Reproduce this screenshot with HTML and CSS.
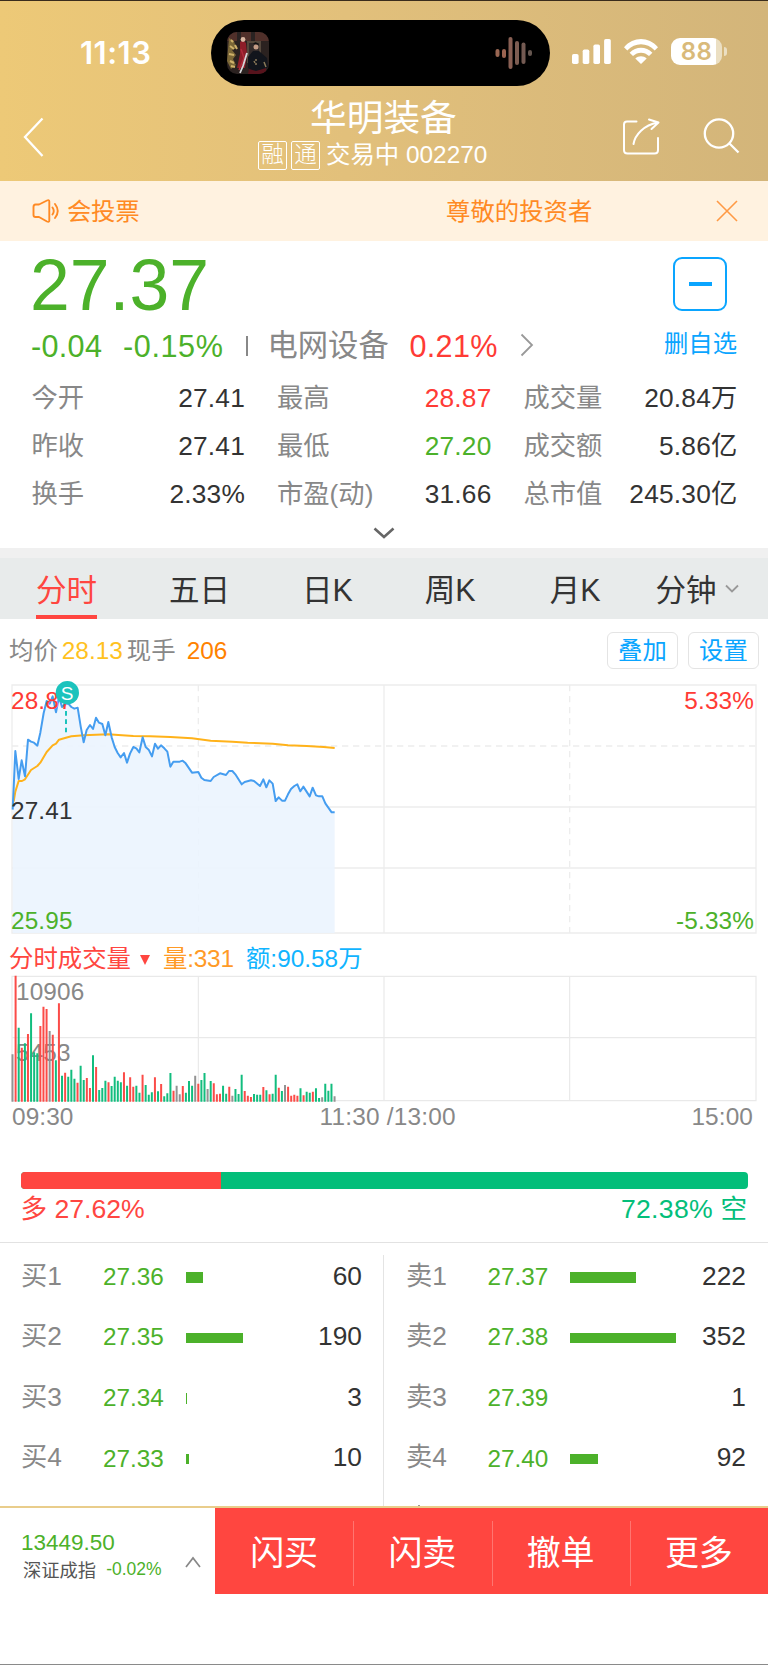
FILE: index.html
```html
<!DOCTYPE html>
<html lang="zh-CN">
<head>
<meta charset="utf-8">
<title>华明装备 002270</title>
<link rel="stylesheet" href="styles.css">
</head>
<body>
<div class="screen">
  <header class="header">
    <div class="status">
      <span class="clock">11:13</span>
      <div class="island">
        <svg class="art" viewBox="0 0 42 42">
          <defs><clipPath id="artClip"><rect width="42" height="42" rx="10"/></clipPath></defs>
          <g clip-path="url(#artClip)">
            <rect width="42" height="42" fill="#2b2220"/>
            <path d="M0 0H42V9H0Z" fill="#50302a"/>
            <path d="M10 0h4v12h-4zM24 0h4v10h-4z" fill="#2a2322"/>
            <path d="M20 9h14v22H20Z" fill="#55483c"/>
            <path d="M22 11h10v18H22Z" fill="#332b2a"/>
            <path d="M2 6l5 3 2 7-4 2 4 5-3 4 3 6-5 4-4-8Z" fill="#7b6737"/>
            <path d="M4 8l2 2M3 14l4 3M2 22l5 1M3 29l4 2M8 13l2 4M4 34l4 1" stroke="#d0b26a" stroke-width="2"/>
            <path d="M13 10l3-2 3 3 1 11-2 14H10l3-14Z" fill="#8d1d28"/>
            <path d="M14 17l3 9-5 12" stroke="#b02b3b" stroke-width="1.500" fill="none"/>
            <circle cx="16" cy="7.500" r="2.400" fill="#d9b7a2"/>
            <path d="M20 21l-4 13-3 7" stroke="#d5d6d8" stroke-width="1.800" fill="none"/>
            <path d="M21 25l5-6h6l8 7 1 9-9 7-11-6Z" fill="#12151c"/>
            <circle cx="29" cy="15" r="2.500" fill="#c49c86"/>
            <path d="M26 12q3-4 6 1l-3-1Z" fill="#111"/>
            <path d="M29 27v2M29 31v2M27 29l1 2M37 30l2 5" stroke="#8b7a59" stroke-width="1.500"/>
            <path d="M22 37l7 2 10-3v6H21Z" fill="#57131c"/>
          </g>
        </svg>
        <svg class="wave" viewBox="0 0 38 34">
          <g stroke-width="4" stroke-linecap="round">
            <path d="M2.500 15v4" stroke="#9a6753"/><path d="M9 15v5" stroke="#9a6350"/>
            <path d="M15.500 3v28" stroke="#8a6054"/><path d="M22 7v20" stroke="#7d5d52"/>
            <path d="M28.500 8.500v17.500" stroke="#745a52"/><path d="M35 16v2" stroke="#65564f"/>
          </g>
        </svg>
      </div>
      <svg class="signal" viewBox="0 0 39 25" fill="#fff">
        <rect y="15" width="6.600" height="10" rx="1.700"/><rect x="10.700" y="10.600" width="6.600" height="14.400" rx="1.700"/>
        <rect x="21.400" y="5.500" width="6.600" height="19.500" rx="1.700"/><rect x="32.100" width="6.700" height="25" rx="1.700"/>
      </svg>
      <svg class="wifi" viewBox="0 0 34 25" fill="#fff">
        <path d="M0 8.200C9.500-2.700 24.500-2.700 34 8.200L30.700 11.500C23 3.200 11 3.200 3.300 11.500Z"/>
        <path d="M5.600 13.800C12 7 22 7 28.400 13.800L25 17.100C20.500 12.500 13.500 12.500 9 17.100Z"/>
        <path d="M11.300 19.500C14.500 16.500 19.500 16.500 22.700 19.500L17 25Z"/>
      </svg>
      <div class="battery"><span class="cell"><span class="level">88</span></span><span class="nub"></span></div>
    </div>
    <div class="nav">
      <svg class="back" viewBox="0 0 22 42"><path d="M19.500 2.500L2 21L19.500 40" fill="none" stroke="#fff" stroke-width="2.300"/></svg>
      <div class="heading">
        <h1 class="title">华明装备</h1>
        <div class="subtitle"><span class="flag">融</span><span class="flag">通</span><span class="state">交易中 002270</span></div>
      </div>
      <svg class="share" viewBox="0 0 38 38" fill="none" stroke="#fff" stroke-width="2" stroke-linecap="round" stroke-linejoin="round">
        <path d="M14.500 3.500H5Q2 3.500 2 6.500V32Q2 35.500 5.500 35.500H32.500Q36 35.500 36 32V20"/>
        <path d="M11.500 26C13 17 22 7 35.500 4.500M27 1.500L36.500 4.500L29.500 11"/>
      </svg>
      <svg class="search" viewBox="0 0 38 38" fill="none" stroke="#fff" stroke-width="2.300"><circle cx="17" cy="15.500" r="14.200"/><path d="M27 25L36.500 34.500"/></svg>
    </div>
  </header>

  <div class="notice">
    <svg class="speaker" viewBox="0 0 28 24" fill="none" stroke="#ff8a24" stroke-width="1.900" stroke-linecap="round" stroke-linejoin="round">
      <path d="M15 1.500L7 5.500H3.500Q1.500 5.500 1.500 8V16Q1.500 18 3.500 18H7L15 22.500Q17.300 23.500 17.300 21.500V2.500Q17.300.500 15 1.500Z"/>
      <path d="M20.500 8.500Q23 12 20.500 15.500M23 5Q28.500 12 23 19"/>
    </svg>
    <span class="notice-a">会投票</span><span class="notice-b">尊敬的投资者</span>
    <svg class="close" viewBox="0 0 22 22"><path d="M1 1L21 21M21 1L1 21" stroke="#ff9a45" stroke-width="1.600"/></svg>
  </div>

  <section class="quote">
    <div class="quote-top">
      <div class="quote-main">
        <div class="price">27.37</div>
        <div class="change">
          <span class="down delta">-0.04</span><span class="down pct">-0.15%</span><i class="sep"></i>
          <span class="sector">电网设备</span><span class="up sector-pct">0.21%</span>
          <svg class="go" viewBox="0 0 14 24"><path d="M1.500 1.500L12 12L1.500 22.500" fill="none" stroke="#999" stroke-width="1.800"/></svg>
        </div>
      </div>
      <div class="fav"><span class="fav-box"><i></i></span><span class="fav-text">删自选</span></div>
    </div>
    <div class="stats">
      <div><span>今开</span><b>27.41</b></div><div><span>最高</span><b class="up">28.87</b></div><div><span>成交量</span><b>20.84万</b></div>
      <div><span>昨收</span><b>27.41</b></div><div><span>最低</span><b class="down">27.20</b></div><div><span>成交额</span><b>5.86亿</b></div>
      <div><span>换手</span><b>2.33%</b></div><div><span>市盈(动)</span><b>31.66</b></div><div><span>总市值</span><b>245.30亿</b></div>
    </div>
    <div class="more"><svg viewBox="0 0 22 12"><path d="M1.500 1.500L11 10L20.500 1.500" fill="none" stroke="#666" stroke-width="2.600"/></svg></div>
  </section>

  <nav class="tabs">
    <span class="tab active">分时</span><span class="tab">五日</span><span class="tab">日K</span><span class="tab">周K</span><span class="tab">月K</span>
    <span class="tab">分钟</span><svg class="tab-arrow" viewBox="0 0 14 10"><path d="M1 1.500L7 7.500L13 1.500" fill="none" stroke="#999" stroke-width="1.800"/></svg>
  </nav>

  <div class="info">
    <span>均价</span><span class="avg">28.13</span><span>现手</span><span class="last">206</span>
    <span class="btn">叠加</span><span class="btn">设置</span>
  </div>

  <svg class="chart" viewBox="0 0 2304 786">
    <g fill="none" stroke="#ededed" stroke-width="4">
      <path d="M36 30H2268V774H36ZM36 396H2268M36 579H2268M1152 30V774"/>
      <path d="M595 30V774M1709 30V774M36 213H2268" stroke-dasharray="19 14"/>
    </g>
    <path class="area" d=""/>
    <path fill="none" stroke="#ffb21a" stroke-width="6" stroke-linejoin="round" d="M41 380L46 350L56 318L66 318L75 313L93 285L112 273L121 263L140 231L158 211L168 206L177 194L195 189L214 184L233 182L251 181L288 179L325 178L355 180L400 183L450 184L511 186L576 190L632 197L697 200L743 203L818 206L864 211L920 213L971 216L1004 219"/>
    <path class="line" d=""/>
    <g class="label">
      <text x="33" y="102" fill="#ff3b35">28.87</text><text x="33" y="431" fill="#333">27.41</text><text x="33" y="762" fill="#4cb12a">25.95</text>
      <text x="2262" y="102" fill="#ff3b35" text-anchor="end">5.33%</text><text x="2262" y="762" fill="#4cb12a" text-anchor="end">-5.33%</text>
    </g>
    <path d="M198 108V172" stroke="#1cc3bd" stroke-width="6" stroke-dasharray="14 11"/>
    <circle cx="202" cy="53" r="35" fill="#1cc3bd"/>
    <text class="mark" x="201" y="74" text-anchor="middle">S</text>
  </svg>

  <div class="vol-title"><span class="vt-name">分时成交量</span><i class="tri"></i><span class="vt-vol">量:331</span><span class="vt-amt">额:90.58万</span></div>

  <svg class="volume" viewBox="0 105 2304 390">
    <path fill="none" stroke="#e9e9e9" stroke-width="3.500" d="M36 109H2268V482H36ZM36 293H2268M595 109V482M1152 109V482M1709 109V482"/>
    <g class="label" fill="#888"><text x="48" y="180">10906</text><text x="48" y="364">5453</text></g>
    <g class="bars"></g>
  </svg>

  <div class="axis"><span>09:30</span><span class="noon">11:30 /13:00</span><span>15:00</span></div>

  <div class="ratio">
    <div class="ratio-bar"><i class="bull" style="width:27.62%"></i></div>
    <div class="ratio-text"><span class="bull-text">多 27.62%</span><span class="bear-text">72.38% 空</span></div>
  </div>

  <div class="book">
    <div class="side">
      <div class="level-row"><span>买1</span><em>27.36</em><i style="width:17px"></i><b>60</b></div>
      <div class="level-row"><span>买2</span><em>27.35</em><i style="width:56.500px"></i><b>190</b></div>
      <div class="level-row"><span>买3</span><em>27.34</em><i style="width:1px"></i><b>3</b></div>
      <div class="level-row"><span>买4</span><em>27.33</em><i style="width:3px"></i><b>10</b></div>
    </div>
    <div class="side">
      <div class="level-row"><span>卖1</span><em>27.37</em><i style="width:66px"></i><b>222</b></div>
      <div class="level-row"><span>卖2</span><em>27.38</em><i style="width:105.500px"></i><b>352</b></div>
      <div class="level-row"><span>卖3</span><em>27.39</em><i style="width:0"></i><b>1</b></div>
      <div class="level-row"><span>卖4</span><em>27.40</em><i style="width:27.500px"></i><b>92</b></div>
      <div class="peek"></div>
    </div>
  </div>

  <footer class="footer">
    <div class="index">
      <div class="index-text"><div class="index-value">13449.50</div><div class="index-row"><span>深证成指</span><em>-0.02%</em></div></div>
      <svg class="caret" viewBox="0 0 16 12"><path d="M1 11L8 2L15 11" fill="none" stroke="#888" stroke-width="1.700"/></svg>
    </div>
    <div class="actions"><span>闪买</span><span>闪卖</span><span>撤单</span><span>更多</span></div>
  </footer>
</div>
<script src="chart.js"></script>
</body>
</html>
```

FILE: styles.css
```css
* { box-sizing: border-box; }
body { margin: 0; background: #fff; }
.screen {
  width: 768px; height: 1665px; overflow: hidden; display: flex; flex-direction: column;
  border-bottom: 1px solid #8a8a8a; background: #fff; color: #333;
  font-family: "Liberation Sans", "Noto Sans CJK SC", sans-serif; font-weight: 400; line-height: 1.2;
  white-space: nowrap;
}
.screen > * { flex: none; }
svg { display: block; flex: none; }
i, em { font-style: normal; }
b { font-weight: inherit; }
.up { color: #ff3b35; }
.down { color: #4cb12a; }

.header { height: 181px; border-top: 1px solid #3a2c1c; background: linear-gradient(90deg, #edc977, #e2c07b 45%, #d3b57a); color: #fff; }
.status { height: 99px; padding: 5px 0 0 80px; display: flex; align-items: center; }
.clock { width: 131px; font: 600 31px/40px Inter, sans-serif; letter-spacing: .5px; }
.island { width: 339px; height: 66px; border-radius: 33px; background: #000; padding: 0 17px 0 16px; display: flex; align-items: center; justify-content: space-between; }
.art { width: 42px; height: 42px; }
.wave { width: 38px; height: 34px; }
.signal { width: 39px; height: 25px; margin-left: 22px; margin-top: -3px; }
.wifi { width: 34px; height: 25px; margin-left: 13px; margin-top: -3px; }
.battery { display: flex; align-items: center; gap: 2px; margin-left: 13px; margin-top: -3px; }
.cell { width: 51px; height: 27px; border-radius: 9px; background: linear-gradient(90deg, #fff 45px, #ebdfc3 45px); }
.level { display: block; text-align: center; color: #d9ba7a; font: 600 24px/28px Inter, sans-serif; letter-spacing: .5px; }
.nub { width: 3px; height: 9px; border-radius: 0 3px 3px 0; background: #ebdfc3; }
.nav { height: 81px; display: flex; align-items: center; padding: 0 28px 7px 23px; }
.back { width: 22px; height: 42px; }
.heading { width: 256px; height: 74px; margin-left: 211px; }
.title { margin: 0; font-size: 36.700px; line-height: 37px; font-weight: 400; padding-left: 54px; height: 37px; }
.subtitle { height: 36px; display: flex; align-items: center; font-size: 24.400px; line-height: 30px; padding-left: 2px; }
.flag { width: 29px; height: 29px; border: 1.500px solid #fff; border-radius: 2px; font-size: 22.500px; line-height: 25px; font-weight: 300; margin-right: 4px; display: flex; justify-content: center; }
.state { margin-left: 2px; }
.share { width: 38px; height: 38px; margin-left: 110px; }
.search { width: 38px; height: 38px; margin-left: auto; }

.notice { height: 60px; background: #fff2e0; color: #ff8a24; display: flex; align-items: center; padding: 0 30px 0 32px; font-size: 24.400px; line-height: 30px; }
.notice span { padding-top: 2px; }
.speaker { width: 28px; height: 24px; }
.notice-a { width: 379px; margin-left: 7px; letter-spacing: -.3px; }
.close { width: 22px; height: 22px; margin-left: auto; }

.quote { height: 307px; padding: 8px 31px 0 31px; }
.quote-top { height: 125px; display: flex; justify-content: space-between; }
.price { height: 72px; font-size: 71.500px; line-height: 72px; color: #4cb12a; margin-left: -1px; }
.change { height: 50px; display: flex; align-items: center; font-size: 30.600px; }
.delta { width: 92px; letter-spacing: .3px; }
.pct { width: 123px; letter-spacing: .6px; }
.sep { width: 1.500px; height: 20px; background: #888; margin-right: 20px; }
.sector { width: 142px; color: #888; font-size: 30.300px; }
.sector-pct { width: 87px; letter-spacing: .3px; }
.go { width: 14px; height: 24px; margin-left: 23px; margin-top: -3px; }
.fav { width: 74px; padding-top: 8px; display: flex; flex-direction: column; align-items: center; }
.fav-box { width: 54px; height: 54px; border: 2px solid #0aa5ff; border-radius: 9px; display: flex; align-items: center; justify-content: center; }
.fav-box i { width: 23px; height: 4px; background: #0aa5ff; }
.fav-text { color: #0aa5ff; font-size: 24.400px; line-height: 30px; margin-top: 18px; margin-right: -1px; }
.stats { display: grid; grid-template-columns: 213.500px 214.500px 214px; column-gap: 32px; grid-auto-rows: 47.900px; font-size: 26.300px; line-height: 48px; padding-left: .5px; }
.stats div { display: flex; justify-content: space-between; }
.stats span { color: #888; }
.stats b { letter-spacing: .2px; }
.more { height: 30px; display: flex; justify-content: center; align-items: center; }
.more svg { width: 22px; height: 12px; }

.tabs { height: 71px; border-top: 10px solid #f0f0f0; background: #e8ebeb; display: flex; align-items: center; padding-left: 36px; font-size: 30.500px; }
.tab { height: 61px; line-height: 64px; margin-right: 72px; }
.tab.active { color: #ff4640; border-bottom: 4px solid #ff4640; }
.tab:nth-of-type(4) { margin-right: 74px; }
.tab:nth-of-type(5) { margin-right: 55px; }
.tab:nth-of-type(6) { margin-right: 8px; }
.tab-arrow { width: 14px; height: 10px; }

.info { height: 56px; padding: 6px 9px 0 9px; display: flex; align-items: center; font-size: 24.400px; line-height: 30px; color: #888; }
.info > span:not(.btn) { padding-top: 1px; }
.avg { color: #ffc21f; margin: 0 4px; }
.last { color: #ff8200; margin: 0 auto 0 11px; }
.btn { width: 71px; height: 37px; border: 1px solid #e4e4e4; border-radius: 6px; color: #0aa5ff; line-height: 36px; text-align: center; margin-left: 10px; }

.chart { width: 768px; height: 262px; }
.area { fill: #eaf4fe; fill-opacity: .88; }
.line { fill: none; stroke: #459df0; stroke-width: 6; stroke-linejoin: round; }
.label { font-size: 73px; letter-spacing: .4px; }
.mark { font-size: 57px; fill: #fff; }
.vol-title { height: 38px; padding: 5px 0 0 9px; display: flex; align-items: center; font-size: 24.400px; }
.vt-name { color: #ff4640; }
.tri { border: 5px solid transparent; border-top: 10px solid #ff4640; border-bottom: 0; margin: 2px 13px 0 9px; }
.vt-vol { color: #ff9a26; width: 83px; letter-spacing: -.2px; }
.vt-amt { color: #10b4ff; }
.volume { width: 768px; height: 130px; }
.axis { height: 23px; line-height: 23px; padding: 0 15px 0 12px; display: flex; font-size: 24.400px; color: #888; letter-spacing: .1px; }
.noon { margin: 0 auto 0 246px; letter-spacing: .2px; }

.ratio { height: 114px; padding: 44px 20.500px 0; }
.ratio-bar { height: 17px; border-radius: 4px; overflow: hidden; background: #03be7a; }
.bull { display: block; height: 17px; background: #ff4641; }
.ratio-text { height: 40px; line-height: 40px; display: flex; justify-content: space-between; font-size: 26.600px; }
.bull-text { color: #ff4641; }
.bear-text { color: #03be7a; letter-spacing: .3px; }

.book { height: 264px; border-top: 1px solid #e2e2e2; display: grid; grid-template-columns: 384px 384px; background: linear-gradient(#e4e4e4, #e4e4e4) 383px 12px / 1px 252px no-repeat; }
.side { padding: 3px 22px 0 21px; }
.level-row { height: 60.600px; display: flex; align-items: center; font-size: 26.300px; }
.level-row span { width: 82px; color: #888; }
.level-row em { width: 83px; font-size: 24.300px; color: #4cb12a; }
.level-row i { height: 10.500px; background: #4cb12a; margin-top: 2px; }
.level-row b { margin-left: auto; }
.side + .side .level-row span { width: 82.500px; padding-left: 1px; }
.side + .side .level-row em { width: 82.500px; }
.peek { width: 2px; height: 1px; margin: 16.500px 0 0 13px; background: #999; }

.footer { height: 88px; border-top: 2px solid #e9cd8b; display: flex; }
.index { width: 215px; padding: 0 14px 0 21px; display: flex; justify-content: space-between; }
.index-text { padding-top: 20px; }
.index-value { font-size: 22.500px; line-height: 30px; color: #4cb12a; }
.index-row { font-size: 18.300px; line-height: 26px; color: #555; display: flex; padding-left: 2px; }
.index-row em { color: #4cb12a; font-size: 17.500px; margin-left: 10px; line-height: 23px; }
.caret { width: 16px; height: 12px; margin-top: 48px; }
.actions { flex: 1; background: #ff4640; color: #fff; display: grid; grid-template-columns: repeat(4, 1fr); font-size: 34px; line-height: 90px; text-align: center; }
.actions span + span { background: linear-gradient(#ff7570, #ff7570) 0 13px / 1px 65px no-repeat; }
```

FILE: chart.js
```js
// Minute prices, as [x, y] pairs in chart units.
const price = [
  38,404, 46,228, 56,312, 65,256, 75,304, 84,194, 93,200, 102,203, 112,212, 121,173, 131,114, 140,78, 149,86,
  158,64, 168,112, 177,66, 186,96, 195,86, 205,86, 214,96, 223,101, 233,98, 242,154, 251,202, 260,165, 270,150,
  279,162, 288,128, 297,143, 307,147, 316,181, 325,141, 335,187, 344,216, 353,234, 362,247, 372,234, 381,263,
  390,236, 400,216, 409,220, 418,232, 428,187, 437,216, 446,224, 456,244, 465,206, 474,221, 483,211, 493,220,
  502,230, 511,275, 520,260, 539,260, 548,257, 557,265, 576,293, 595,291, 604,308, 613,315, 632,318, 641,306,
  660,295, 678,300, 687,288, 697,288, 706,298, 725,328, 734,321, 753,316, 762,318, 780,333, 790,313, 799,337,
  808,316, 818,326, 827,378, 836,367, 846,377, 855,377, 864,358, 873,342, 883,333, 892,328, 901,349, 910,335,
  929,364, 938,338, 948,361, 957,364, 967,364, 976,385, 995,412, 1004,412
];
let line = "";
for (let k = 0; k < price.length; k += 2) line += (k ? "L" : "M") + price[k] + " " + price[k + 1];
document.querySelector(".line").setAttribute("d", line);
document.querySelector(".area").setAttribute("d", line + "L1004 774L38 774Z");

// Minute volumes: r = rising, g = falling, n = unchanged; the number is the bar's top.
const volume = ("n343 r107 g263 r323 g310 r282 g220 g337 g340 r258 r200 r207 n273 r284 g361 r190 g407 r398 g410 g389 g416 " +
  "r428 g377 g420 r414 r444 g346 r381 g450 g444 g422 r427 g438 g410 g422 g427 r397 g437 r412 r440 g437 g458 r404 g435 " +
  "g464 g457 r412 g454 r432 g469 g460 g399 r452 n437 n463 r438 g458 g423 g437 n407 r431 g420 g399 n447 g423 r430 r463 " +
  "r461 g437 g461 r440 n467 g447 g462 g404 r453 r467 r471 g462 g464 g464 r441 g451 r463 g461 g404 r443 g453 n435 r440 " +
  "r467 r464 r467 g445 r466 g455 g458 r455 g445 g474 n472 g431 g452 g431 n469").split(" ");
const colors = { r: "#fb4c48", g: "#12bd7e", n: "#939393" };
const paths = { r: "", g: "", n: "" };
volume.forEach((v, i) => { paths[v[0]] += "M" + (37.5 + i * 9.29).toFixed(1) + " 485V" + v.slice(1); });
for (const key in paths) {
  const p = document.createElementNS("http://www.w3.org/2000/svg", "path");
  p.setAttribute("d", paths[key]);
  p.setAttribute("stroke", colors[key]);
  p.setAttribute("stroke-width", "6");
  document.querySelector(".bars").appendChild(p);
}
```
